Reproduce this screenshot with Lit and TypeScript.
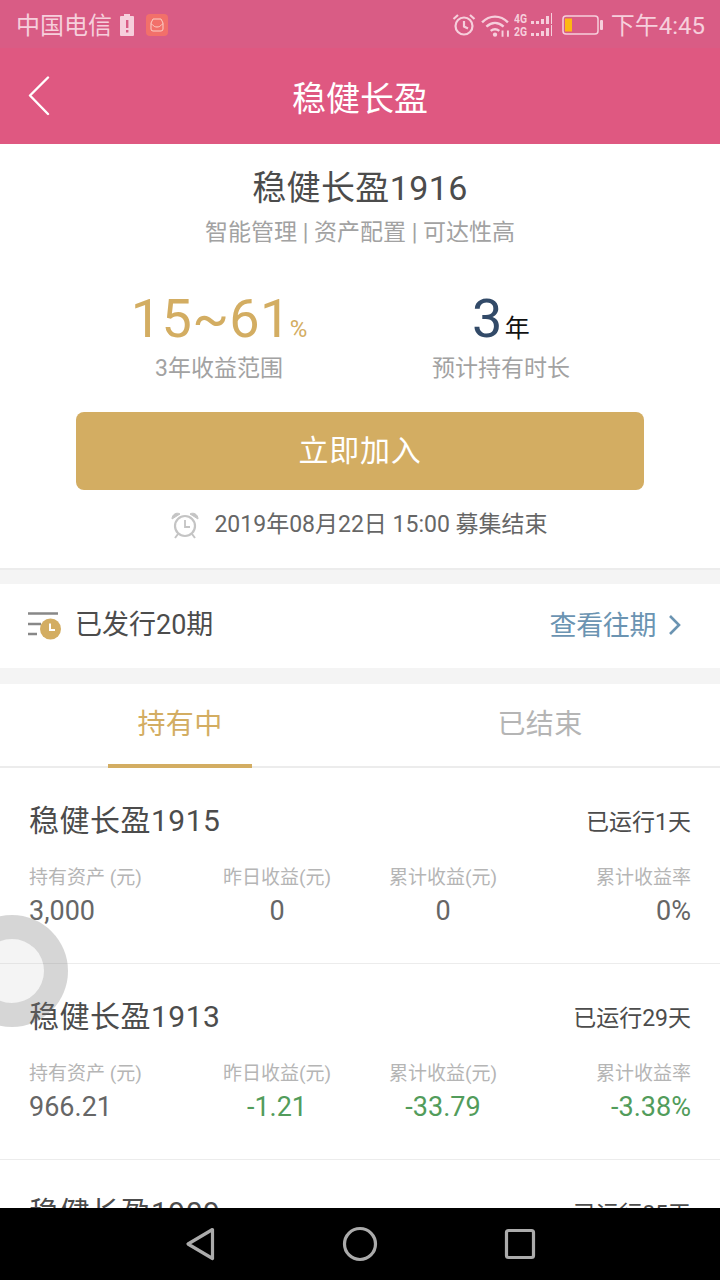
import { LitElement, html, css, svg } from "lit";
import { customElement } from "lit/decorators.js";

interface Item { name: string; run: string; vals: string[]; neg: boolean; }
const items: Item[] = [
  { name: "稳健长盈1915", run: "已运行1天", vals: ["3,000", "0", "0", "0%"], neg: false },
  { name: "稳健长盈1913", run: "已运行29天", vals: ["966.21", "-1.21", "-33.79", "-3.38%"], neg: true },
  { name: "稳健长盈1909", run: "已运行85天", vals: ["", "", "", ""], neg: false },
];
const labels = ["持有资产 (元)", "昨日收益(元)", "累计收益(元)", "累计收益率"];

@customElement("app-root")
export class AppRoot extends LitElement {
  static styles = css`
    :host { display: block; width: 720px; height: 1280px; position: relative; overflow: hidden; background: #fff;
      font-family: Roboto, "Noto Sans CJK SC", sans-serif; color: #4c4c4c; }
    .status { height: 48px; box-sizing: border-box; padding: 2px 15px 0 16px; background: #d95c85; display: flex; align-items: center; color: #f6cfdc; font-size: 24px; }
    .status .left { display: flex; align-items: center; flex: 1; }
    .status .right { display: flex; align-items: center; }
    .carrier { line-height: 46px; padding-top: 1px; }
    .time { padding-bottom: 4px; }
    .bat-alert { margin-left: 8px; }
    .mail { margin-left: 12px; }
    .st-alarm { margin-right: 5px; }
    .st-wifi { margin-right: 5px; }
    .st-sig { margin-right: 10px; }
    .st-bat { margin-right: 8px; }
    .header { height: 96px; background: #df5881; display: flex; align-items: center; justify-content: center; position: relative; color: #fff; font-size: 34px; }
    .back { position: absolute; left: 28px; top: 28px; }
    .top { background: #fff; height: 424px; box-sizing: border-box; padding-top: 21px; display: flex; flex-direction: column; align-items: center; }
    .title { font-size: 34px; line-height: 46px; letter-spacing: 0.4px; }
    .sub { font-size: 23px; line-height: 36px; color: #a2a2a2; margin-top: 4px; }
    .stats { display: grid; grid-template-columns: 360px 360px; width: 720px; margin-top: 33px; }
    .stat { display: flex; flex-direction: column; align-items: center; box-sizing: border-box; width: 360px; }
    .stat.l { padding-left: 78px; }
    .stat.r { padding-right: 78px; }
    .big { display: flex; align-items: baseline; height: 66px; line-height: 66px; padding-top: 2px; margin-bottom: -2px; }
    .num { font-size: 54px; letter-spacing: 0.4px; }
    .gold { color: #d3ad62; }
    .navy { color: #324a68; }
    .unit-p { font-size: 24px; color: #d3ad62; margin-left: -1px; }
    .unit-y { font-size: 25px; color: #111; margin-left: 2px; }
    .stat-l { font-size: 23px; line-height: 32px; color: #a2a2a2; margin-top: 3px; }
    .btn { width: 568px; height: 78px; box-sizing: border-box; padding-bottom: 6px; border-radius: 8px; background: #d3ad62; color: #fff; font-size: 30px; display: flex; align-items: center; justify-content: center; margin-top: 27px; letter-spacing: 0.7px; }
    .deadline { display: flex; align-items: center; margin-top: 18px; font-size: 23px; line-height: 34px; color: #666; }
    .deadline svg { margin-right: 14px; margin-left: -2px; }
    .gap { height: 16px; background: #f4f4f4; }
    .gap.line { border-top: 2px solid #ececec; height: 14px; }
    .issue { height: 84px; box-sizing: border-box; padding: 0 38px 6px 28px; display: flex; align-items: center; font-size: 27px; }
    .issue .ic { margin-top: 6px; }
    .issue .txt { margin-left: 14px; flex: 1; padding-bottom: 2px; }
    .issue .link { color: #6b94b2; margin-right: 12px; letter-spacing: -0.4px; }
    .issue .chev { margin-top: 4px; }
    .tabs { height: 84px; box-sizing: border-box; border-bottom: 2px solid #ececec; display: grid; grid-template-columns: 360px 360px; font-size: 28px; }
    .tab { display: flex; align-items: center; justify-content: center; position: relative; color: #b5b5b5; height: 82px; box-sizing: border-box; padding-bottom: 7px; letter-spacing: 0.3px; }
    .tab.on { color: #d3ad62; }
    .tab.on::after { content: ""; position: absolute; left: 108px; width: 144px; height: 4px; bottom: -2px; background: #d3ad62; }
    .item { height: 196px; box-sizing: border-box; border-bottom: 1px solid #ececec; padding: 32px 29px 0; }
    .head { display: flex; justify-content: space-between; align-items: center; height: 42px; }
    .name { font-size: 30px; letter-spacing: 0.5px; padding-bottom: 6px; }
    .run { font-size: 23px; padding-bottom: 2px; }
    .cols { display: grid; grid-template-columns: 163px 170px 162px 1fr; margin-top: 21px; }
    .col { display: flex; flex-direction: column; align-items: center; }
    .col:first-child { align-items: flex-start; }
    .col:last-child { align-items: flex-end; }
    .lab { font-size: 19px; line-height: 30px; color: #b5b5b5; }
    .val { font-size: 27px; line-height: 38px; color: #666; margin-top: -1px; min-height: 38px; }
    .val.neg { color: #529c5b; }
    .content { height: 1208px; overflow: hidden; }
    .nav { height: 72px; background: #000; display: flex; align-items: center; justify-content: center; }
    .nav svg { display: block; }
    .float { position: absolute; left: -44px; top: 915px; width: 112px; height: 112px; box-sizing: border-box; border-radius: 50%;
      border: 24px solid rgba(120,120,120,0.3); background: rgba(200,200,200,0.2); background-clip: padding-box; pointer-events: none; }
  `;

  renderItem(it: Item) {
    return html`<div class="item">
      <div class="head"><span class="name">${it.name}</span><span class="run">${it.run}</span></div>
      <div class="cols">
        ${labels.map((l, i) => html`<div class="col"><span class="lab">${l}</span>
          <span class="val ${it.neg && i > 0 ? "neg" : ""}">${it.vals[i]}</span></div>`)}
      </div>
    </div>`;
  }

  render() {
    return html`
      <div class="content">
        <div class="status">
          <div class="left">
            <span class="carrier">中国电信</span>
            <svg class="bat-alert" width="14" height="24" viewBox="0 0 14 24"><path d="M4 1h6v2h3a1 1 0 0 1 1 1v18a1 1 0 0 1-1 1H1a1 1 0 0 1-1-1V4a1 1 0 0 1 1-1h3z" fill="#f6cfdc"/><path d="M6 7h2.4v8H6zM6 17h2.4v2.6H6z" fill="#d95c85"/></svg>
            <svg class="mail" width="22" height="22" viewBox="0 0 22 22"><rect width="22" height="22" rx="4" fill="#f2706a"/><path d="M5 9l2-4h8l2 4v6a2 2 0 0 1-2 2H7a2 2 0 0 1-2-2zM5 10c2 0 2 3 6 3s4-3 6-3" fill="none" stroke="#fbd0c8" stroke-width="1"/></svg>
          </div>
          <div class="right">
            <svg class="st-alarm" width="24" height="24" viewBox="0 0 24 24" fill="none" stroke="#f6cfdc" stroke-width="2.2"><circle cx="12" cy="13" r="8.5"/><path d="M12 8v5.5l4 2M1.5 6L6 2M22.5 6L18 2"/></svg>
            <svg class="st-wifi" width="28" height="24" viewBox="0 0 26 22" fill="none" stroke="#f6cfdc" stroke-width="2.2"><path d="M1 8.500C8 1.500 18 1.500 25 8.500M5 12.500C10 8 16 8 21 12.500M9 16.500C11.500 14.500 14.500 14.500 17 16.500"/><circle cx="13" cy="20" r="2" fill="#f6cfdc" stroke="none"/><path d="M20 16v6M25 16v6" stroke-width="1.800"/></svg>
            <svg class="st-sig" width="38" height="24" viewBox="0 0 38 24" fill="#f6cfdc">
              <text x="0" y="10" font-size="13" font-family="Roboto" font-weight="700" textLength="13" lengthAdjust="spacingAndGlyphs">4G</text>
              <text x="0" y="22.500" font-size="13" font-family="Roboto" font-weight="700" textLength="13" lengthAdjust="spacingAndGlyphs">2G</text>
              ${[0, 1].map((r) => [0, 1, 2, 3, 4].map((b) => { const h = [3, 3, 5, 8, 11][b]; const base = r ? 23 : 11;
                return svg`<rect x="${17 + b * 5}" y="${base - h}" width="3" height="${h}"/>`; }))}
            </svg>
            <svg class="st-bat" width="41" height="20" viewBox="0 0 41 20"><rect x="1" y="1" width="35" height="18" rx="3" fill="none" stroke="#f6cfdc" stroke-width="1.500"/><rect x="3" y="3.500" width="7" height="13" fill="#fdb813"/><rect x="38" y="5" width="3" height="10" rx="1" fill="#f6cfdc"/></svg>
            <span class="time">下午4:45</span>
          </div>
        </div>
        <div class="header">
          <svg class="back" width="22" height="40" viewBox="0 0 22 40" fill="none" stroke="#fff" stroke-width="2.400" stroke-linecap="round" stroke-linejoin="round"><path d="M20 1.500L2 19.500L20 38"/></svg>
          稳健长盈
        </div>
        <div class="top">
          <div class="title">稳健长盈1916</div>
          <div class="sub">智能管理 | 资产配置 | 可达性高</div>
          <div class="stats">
            <div class="stat l"><div class="big"><span class="num gold">15~61</span><span class="unit-p">%</span></div><div class="stat-l">3年收益范围</div></div>
            <div class="stat r"><div class="big"><span class="num navy">3</span><span class="unit-y">年</span></div><div class="stat-l">预计持有时长</div></div>
          </div>
          <div class="btn">立即加入</div>
          <div class="deadline">
            <svg width="30" height="28" viewBox="0 0 30 28" fill="none" stroke="#c4c4c4"><circle cx="15" cy="15" r="10" stroke-width="2.200"/><path d="M15 9v7h5" stroke-width="1.800"/><path d="M2 8C2 3 7 1 10 3zM28 8C28 3 23 1 20 3z" fill="#c4c4c4" stroke-width="1"/><path d="M8 23l-3 4M22 23l3 4" stroke-width="2"/></svg>
            2019年08月22日 15:00 募集结束
          </div>
        </div>
        <div class="gap line"></div>
        <div class="issue">
          <svg class="ic" width="33" height="28" viewBox="0 0 33 28"><path d="M0 1.500h30M0 12h13M0 22h9" stroke="#888" stroke-width="2.400" fill="none"/><circle cx="22.500" cy="17" r="10.500" fill="#d3ad62"/><path d="M22 11.500v6.500h5" stroke="#fff" stroke-width="2" fill="none"/></svg>
          <span class="txt">已发行20期</span>
          <span class="link">查看往期</span>
          <svg class="chev" width="14" height="22" viewBox="0 0 14 22" fill="none" stroke="#6b94b2" stroke-width="2.600"><path d="M2 2l9 9-9 9"/></svg>
        </div>
        <div class="gap"></div>
        <div class="tabs"><div class="tab on">持有中</div><div class="tab">已结束</div></div>
        ${items.map((i) => this.renderItem(i))}
      </div>
      <div class="nav">
        <svg width="360" height="72" viewBox="0 0 360 72" fill="none" stroke="#ababab" stroke-width="3.200" stroke-linejoin="round">
          <path d="M32.500 21.500L8 36L32.500 50.500z"/>
          <circle cx="180" cy="36" r="15.500"/>
          <rect x="326.500" y="22.500" width="27" height="27" rx="2"/>
        </svg>
      </div>
      <div class="float"></div>
    `;
  }
}
